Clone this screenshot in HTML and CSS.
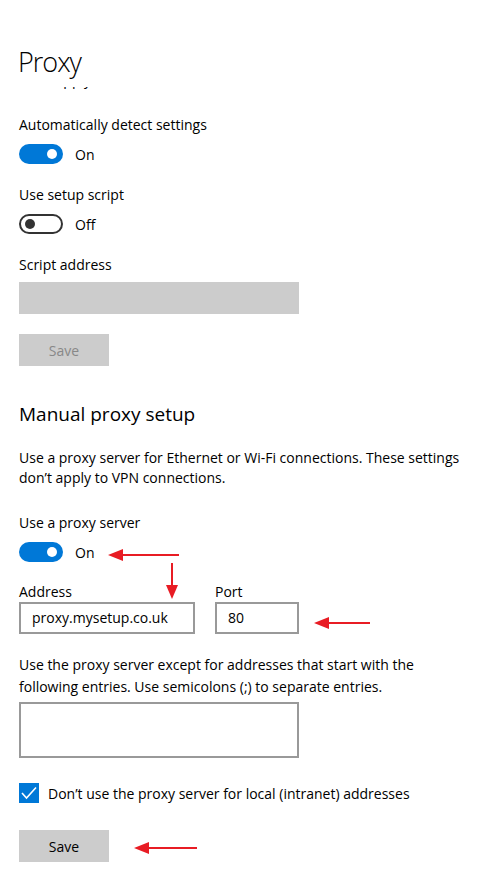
FILE: index.html
```html
<!DOCTYPE html>
<html lang="en">
<head>
    <meta charset="UTF-8">
    <meta name="viewport" content="width=device-width, initial-scale=1.0">
    <title>Proxy</title>
    <link rel="stylesheet" href="styles.css">
</head>
<body>
    <div class="page">
        <div class="header">
            <h1>Proxy</h1>
        </div>

        <!-- previous line scrolled under the header -->
        <div class="clipped">
            <p class="clipped-text">don’t apply to VPN connections.</p>
        </div>

        <div class="content">
            <div class="field-label first">Automatically detect settings</div>
            <div class="toggle-row">
                <span class="toggle on"><span class="knob"></span></span>
                <span class="toggle-text">On</span>
            </div>

            <div class="field-label">Use setup script</div>
            <div class="toggle-row">
                <span class="toggle off"><span class="knob"></span></span>
                <span class="toggle-text">Off</span>
            </div>

            <div class="field-label tight">Script address</div>
            <div class="textbox disabled"></div>

            <button class="btn disabled">Save</button>

            <h2>Manual proxy setup</h2>

            <p class="desc">Use a proxy server for Ethernet or Wi-Fi connections. These settings don’t apply to VPN connections.</p>

            <div class="field-label gap-lg">Use a proxy server</div>
            <div class="toggle-row">
                <span class="toggle on"><span class="knob"></span></span>
                <span class="toggle-text">On</span>
            </div>

            <div class="address-row">
                <div class="address-field">
                    <div class="small-label">Address</div>
                    <div class="textbox address">proxy.mysetup.co.uk</div>
                </div>
                <div class="port-field">
                    <div class="small-label">Port</div>
                    <div class="textbox port">80</div>
                </div>
            </div>

            <p class="desc wide">Use the proxy server except for addresses that start with the following entries. Use semicolons (;) to separate entries.</p>
            <div class="textbox area"></div>

            <div class="check-row">
                <span class="checkbox">
                    <svg width="20" height="20" viewBox="0 0 20 20">
                        <polyline points="3,10 7.5,15 17,4.5" fill="none" stroke="#fff" stroke-width="1.6"/>
                    </svg>
                </span>
                <span class="check-text">Don’t use the proxy server for local (intranet) addresses</span>
            </div>

            <button class="btn">Save</button>
        </div>

        <!-- red annotation arrows drawn over the screenshot -->
        <svg class="annotations" width="490" height="887" viewBox="0 0 490 887">
            <g fill="#e81c24" stroke="#e81c24" stroke-width="2">
                <line x1="179" y1="555" x2="120" y2="555"/>
                <polygon points="108,555 123,549 123,561" stroke="none"/>
                <line x1="172" y1="563" x2="172" y2="587"/>
                <polygon points="172,599 166,585 178,585" stroke="none"/>
                <line x1="370" y1="623" x2="326" y2="623"/>
                <polygon points="314,623 329,617 329,629" stroke="none"/>
                <line x1="197" y1="848" x2="146" y2="848"/>
                <polygon points="134,848 149,842 149,854" stroke="none"/>
            </g>
        </svg>
    </div>
</body>
</html>
```

FILE: styles.css
```css
body {
    margin: 0;
    background: #fff;
    color: #000;
    font-family: "Open Sans", "Noto Sans", sans-serif;
    font-size: 14px;
}

.page {
    position: relative;
    width: 490px;
    height: 887px;
    overflow: hidden;
}

.header {
    padding: 44px 19px 0 18px;
}

h1 {
    margin: 0;
    font-size: 27px;
    font-weight: 300;
    letter-spacing: -1px;
    line-height: 36px;
}

.clipped {
    height: 3px;
    margin-top: 7px;
    padding-left: 19px;
    overflow: hidden;
}

.clipped-text {
    margin: -17px 0 0;
    line-height: 20px;
}

.content {
    padding: 0 19px;
}

.field-label {
    line-height: 20px;
    margin-top: 21px;
    margin-bottom: 9px;
}

.field-label.first {
    margin-top: 25px;
}

.field-label.tight {
    margin-bottom: 7px;
}

.field-label.gap-lg {
    margin-top: 25px;
}

.toggle-row {
    display: flex;
    align-items: center;
    height: 20px;
    gap: 12px;
}

.toggle {
    box-sizing: border-box;
    width: 44px;
    height: 20px;
    border-radius: 10px;
    display: flex;
    align-items: center;
}

.toggle .knob {
    width: 10px;
    height: 10px;
    border-radius: 50%;
}

.toggle.on {
    background: #0078d7;
    justify-content: flex-end;
    padding-right: 6px;
}

.toggle.on .knob {
    background: #fff;
}

.toggle.off {
    border: 2px solid #333;
    padding-left: 4px;
}

.toggle.off .knob {
    background: #333;
}

.textbox {
    box-sizing: border-box;
    height: 32px;
    line-height: 28px;
    padding: 0 11px;
    border: 2px solid #999;
    background: #fff;
}

.textbox.disabled {
    width: 280px;
    border-color: #ccc;
    background: #ccc;
}

.btn {
    display: block;
    width: 90px;
    height: 32px;
    margin-top: 20px;
    border: none;
    background: #ccc;
    color: #000;
    font-family: inherit;
    font-size: 14px;
}

.btn.disabled {
    color: #888;
}

h2 {
    margin: 35px 0 0;
    font-size: 19px;
    font-weight: 400;
    line-height: 27px;
}

.desc {
    margin: 20px 0 0;
    line-height: 20px;
    max-width: 452px;
}

.desc.wide {
    line-height: 22px;
}

.address-row {
    display: flex;
    gap: 20px;
    margin-top: 20px;
}

.small-label {
    line-height: 20px;
}

.textbox.address {
    width: 176px;
}

.textbox.port {
    width: 84px;
}

.textbox.area {
    width: 280px;
    height: 56px;
    margin-top: 4px;
}

.check-row {
    display: flex;
    align-items: center;
    gap: 9px;
    margin-top: 25px;
    height: 20px;
}

.checkbox {
    width: 20px;
    height: 20px;
    background: #0078d7;
}

.checkbox svg {
    display: block;
}

.check-row + .btn {
    margin-top: 27px;
}

.annotations {
    position: absolute;
    top: 0;
    left: 0;
    pointer-events: none;
}
```
